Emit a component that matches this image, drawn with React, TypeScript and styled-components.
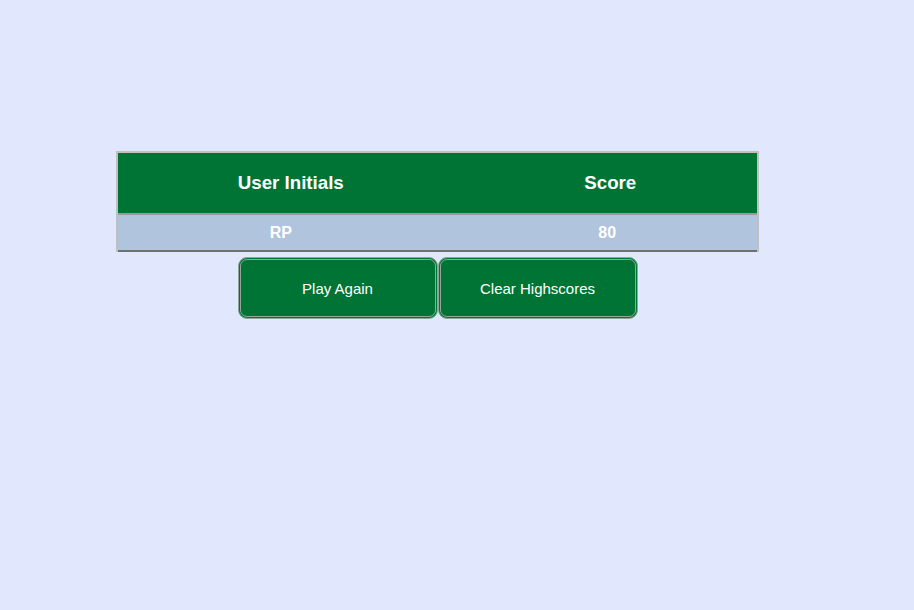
import { createGlobalStyle } from 'styled-components';
import styled from 'styled-components';

const scores = [{ initials: 'RP', score: 80 }];

const GlobalStyle = createGlobalStyle`
  html, body {
    margin: 0;
    padding: 0;
    background: #e1e8fd;
    font-family: "Liberation Sans", Arial, sans-serif;
  }
`;

export default function App() {
  return (
    <>
      <GlobalStyle />
      <Page>
        <Board>
          <HeaderRow>
            <HeadCell>User Initials</HeadCell>
            <HeadCell>Score</HeadCell>
          </HeaderRow>
          {scores.map((s) => (
            <BodyRow key={s.initials}>
              <BodyCell shift={6}>{s.initials}</BodyCell>
              <BodyCell shift={20}>{s.score}</BodyCell>
            </BodyRow>
          ))}
        </Board>
        <Actions>
          <ActionButton>Play Again</ActionButton>
          <ActionButton>Clear Highscores</ActionButton>
        </Actions>
      </Page>
    </>
  );
}

const Page = styled.div`
  padding: 151px 0 0 116px;
  width: 643px;
  display: flex;
  flex-direction: column;
  align-items: center;
`;

const Board = styled.div`
  width: 100%;
  box-sizing: border-box;
  border: 2px solid #c0c0c0;
  border-bottom: none;
`;

const HeaderRow = styled.div`
  display: grid;
  grid-template-columns: 1fr 1fr;
  height: 60px;
  background: #007434;
  border-bottom: 2px solid #9a9a9a;
`;

const HeadCell = styled.div`
  display: flex;
  align-items: center;
  justify-content: center;
  padding-left: 26px;
  color: #ffffff;
  font-weight: bold;
  font-size: 18.72px;
`;

const BodyRow = styled.div`
  display: grid;
  grid-template-columns: 1fr 1fr;
  height: 35px;
  background: #b0c4de;
  border-bottom: 2px solid #707070;
`;

const BodyCell = styled.div<{ shift: number }>`
  display: flex;
  align-items: center;
  justify-content: center;
  padding-left: ${({ shift }) => shift}px;
  color: #ffffff;
  font-weight: bold;
  font-size: 16px;
`;

const Actions = styled.div`
  display: flex;
  gap: 0;
  margin-top: 5px;
`;

const ActionButton = styled.button`
  width: 200px;
  height: 62px;
  box-sizing: border-box;
  background: #007434;
  color: #ffffff;
  font-family: "Liberation Sans", Arial, sans-serif;
  font-size: 15px;
  border: 3px double #8fa89a;
  border-radius: 9px;
  cursor: pointer;
`;
